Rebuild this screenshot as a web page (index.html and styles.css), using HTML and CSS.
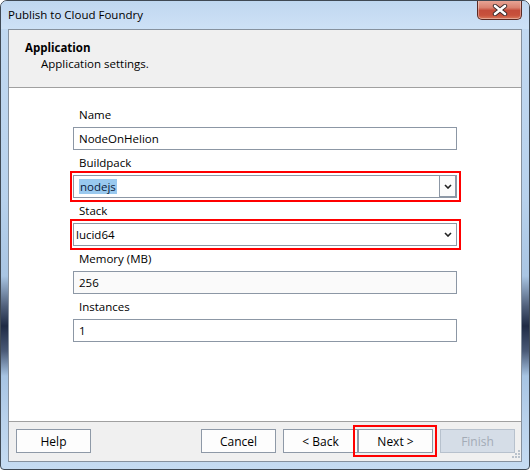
FILE: index.html
```html
<!DOCTYPE html>
<html>
<head>
<meta charset="utf-8">
<title>Publish to Cloud Foundry</title>
<link rel="stylesheet" href="styles.css">
</head>
<body>
<div class="window">
  <div class="titlebar">
    <span class="title">Publish to Cloud Foundry</span>
    <div class="close">
      <svg width="16" height="12" viewBox="0 0 16 12">
        <path d="M3 2 L13 10 M13 2 L3 10" stroke="#3a2a2a" stroke-width="4.4" stroke-linecap="round"/>
        <path d="M3 2 L13 10 M13 2 L3 10" stroke="#ffffff" stroke-width="2.6" stroke-linecap="round"/>
      </svg>
    </div>
  </div>
  <div class="client">
    <div class="header">
      <div class="header-title">Application</div>
      <div class="header-sub">Application settings.</div>
    </div>
    <div class="content">
      <div class="form">
        <div class="field">
          <div class="label">Name</div>
          <div class="input">NodeOnHelion</div>
        </div>
        <div class="field">
          <div class="label">Buildpack</div>
          <div class="input combo marked">
            <span class="sel">nodejs</span>
            <span class="drop-btn">
              <svg width="8" height="5" viewBox="0 0 8 5"><path d="M1 1 L4 4 L7 1" stroke="#222" stroke-width="1.6" fill="none"/></svg>
            </span>
          </div>
        </div>
        <div class="field">
          <div class="label">Stack</div>
          <div class="input combo marked">
            <span>lucid64</span>
            <span class="drop-plain">
              <svg width="8" height="5" viewBox="0 0 8 5"><path d="M1 1 L4 4 L7 1" stroke="#222" stroke-width="1.6" fill="none"/></svg>
            </span>
          </div>
        </div>
        <div class="field">
          <div class="label">Memory (MB)</div>
          <div class="input grey">256</div>
        </div>
        <div class="field">
          <div class="label">Instances</div>
          <div class="input">1</div>
        </div>
      </div>
    </div>
    <div class="buttons">
      <div class="btn">Help</div>
      <div class="spacer"></div>
      <div class="btn">Cancel</div>
      <div class="btn gap">&lt; Back</div>
      <div class="btn next">Next &gt;</div>
      <div class="btn disabled gap2">Finish</div>
      <svg class="grip" width="10" height="10" viewBox="0 0 10 10">
        <g fill="#b9c2cc">
          <rect x="8" y="0" width="2" height="2"/>
          <rect x="5" y="3" width="2" height="2"/><rect x="8" y="3" width="2" height="2"/>
          <rect x="2" y="6" width="2" height="2"/><rect x="5" y="6" width="2" height="2"/><rect x="8" y="6" width="2" height="2"/>
        </g>
      </svg>
    </div>
  </div>
</div>
</body>
</html>
```

FILE: styles.css
```css
html, body {
  margin: 0;
  padding: 0;
  background: #ffffff;
}
body {
  font-family: "Open Sans", "Noto Sans", sans-serif;
  font-size: 11.5px;
  color: #000;
}
.window {
  width: 530px;
  height: 470px;
  box-sizing: border-box;
  border: 1px solid #3f4954;
  border-radius: 7px 7px 4px 4px;
  padding: 0 7px 7px 7px;
  display: flex;
  flex-direction: column;
  background:
    linear-gradient(to bottom,
      #c3daf2 0px, #b7d1ec 200px, #a9c5e3 275px, #51617c 305px, #1f2b45 325px,
      #4a5a77 350px, #a7c4e3 375px, #b9d2ec 420px, #c6dcf2 470px);
  overflow: hidden;
}
.titlebar {
  height: 28px;
  margin: 0 -7px;
  padding: 0 0 0 7px;
  display: flex;
  align-items: center;
  position: relative;
  background: linear-gradient(to bottom, #bfd7f0 0%, #c7dcf3 50%, #cde1f6 100%);
}
.title {
  font-size: 11.5px;
  color: #000;
  margin-top: -1px;
}
.close {
  position: absolute;
  right: 7px;
  top: -1px;
  width: 45px;
  height: 20px;
  box-sizing: border-box;
  border: 1px solid #5b2a23;
  border-top: none;
  border-radius: 0 0 5px 5px;
  background: linear-gradient(to bottom, #e9a99a 0%, #d98270 40%, #c44c3a 55%, #c8513c 80%, #d9795b 100%);
  display: flex;
  align-items: center;
  justify-content: center;
  box-shadow: inset 0 0 0 1px rgba(255, 255, 255, 0.35);
}
.client {
  flex: 1;
  display: flex;
  flex-direction: column;
  border: 1px solid #86919e;
  background: #f0f0f0;
}
.header {
  border-bottom: 1px solid #a0a0a0;
  background: #f0f0f0;
  padding: 10px 0 0 16px;
  box-sizing: content-box;
  height: 47px;
}
.header-title {
  font-weight: bold;
  line-height: 16px;
}
.header-sub {
  line-height: 16px;
  padding-left: 16px;
}
.content {
  height: 319px;
  padding-top: 14px;
  background: #ffffff;
  border-bottom: 1px solid #a0a0a0;
}
.form {
  margin-left: 64px;
  width: 384px;
}
.label {
  height: 25px;
  line-height: 25px;
  padding-left: 6px;
}
.input {
  height: 23px;
  box-sizing: border-box;
  border: 1px solid #8c97a5;
  background: #ffffff;
  padding-left: 5px;
  line-height: 21px;
  display: flex;
  align-items: center;
  position: relative;
}
.input.grey {
  background: #fafafa;
}
.combo {
  padding-left: 2px;
}
.combo.marked::after {
  content: "";
  position: absolute;
  left: -4px;
  right: -5px;
  top: -5px;
  bottom: -5px;
  border: 2px solid #ff0000;
  pointer-events: none;
}
.sel {
  background: #99c9ef;
  color: #0a1a3a;
  padding: 0 1px;
  margin-left: 3px;
  line-height: 15px;
}
.drop-btn {
  margin-left: auto;
  width: 18px;
  height: 23px;
  margin-top: -1px;
  margin-bottom: -1px;
  margin-right: -1px;
  box-sizing: border-box;
  border: 1px solid #8c97a5;
  border-right-width: 2px;
  border-bottom-width: 2px;
  display: flex;
  align-items: center;
  justify-content: center;
  background: #fbfbfb;
}
.drop-plain {
  margin-left: auto;
  width: 17px;
  display: flex;
  align-items: center;
  justify-content: center;
}
.buttons {
  flex: 1;
  display: flex;
  align-items: flex-start;
  padding: 7px 6px 0 7px;
  position: relative;
}
.spacer {
  flex: 1;
}
.btn {
  width: 75px;
  height: 24px;
  box-sizing: border-box;
  border: 1px solid #8e99a7;
  background: #fdfdfd;
  display: flex;
  align-items: center;
  justify-content: center;
  font-size: 12px;
  position: relative;
}
.btn.gap {
  margin-left: 7px;
}
.btn.gap2 {
  margin-left: 7px;
}
.btn.next::after {
  content: "";
  position: absolute;
  left: -6px;
  right: -5px;
  top: -5px;
  bottom: -5px;
  border: 2px solid #ff0000;
}
.btn.disabled {
  background: #d5dde7;
  border-color: #b7c1cd;
  color: #a3abb6;
}
.grip {
  position: absolute;
  right: 1px;
  bottom: 1px;
}
```
